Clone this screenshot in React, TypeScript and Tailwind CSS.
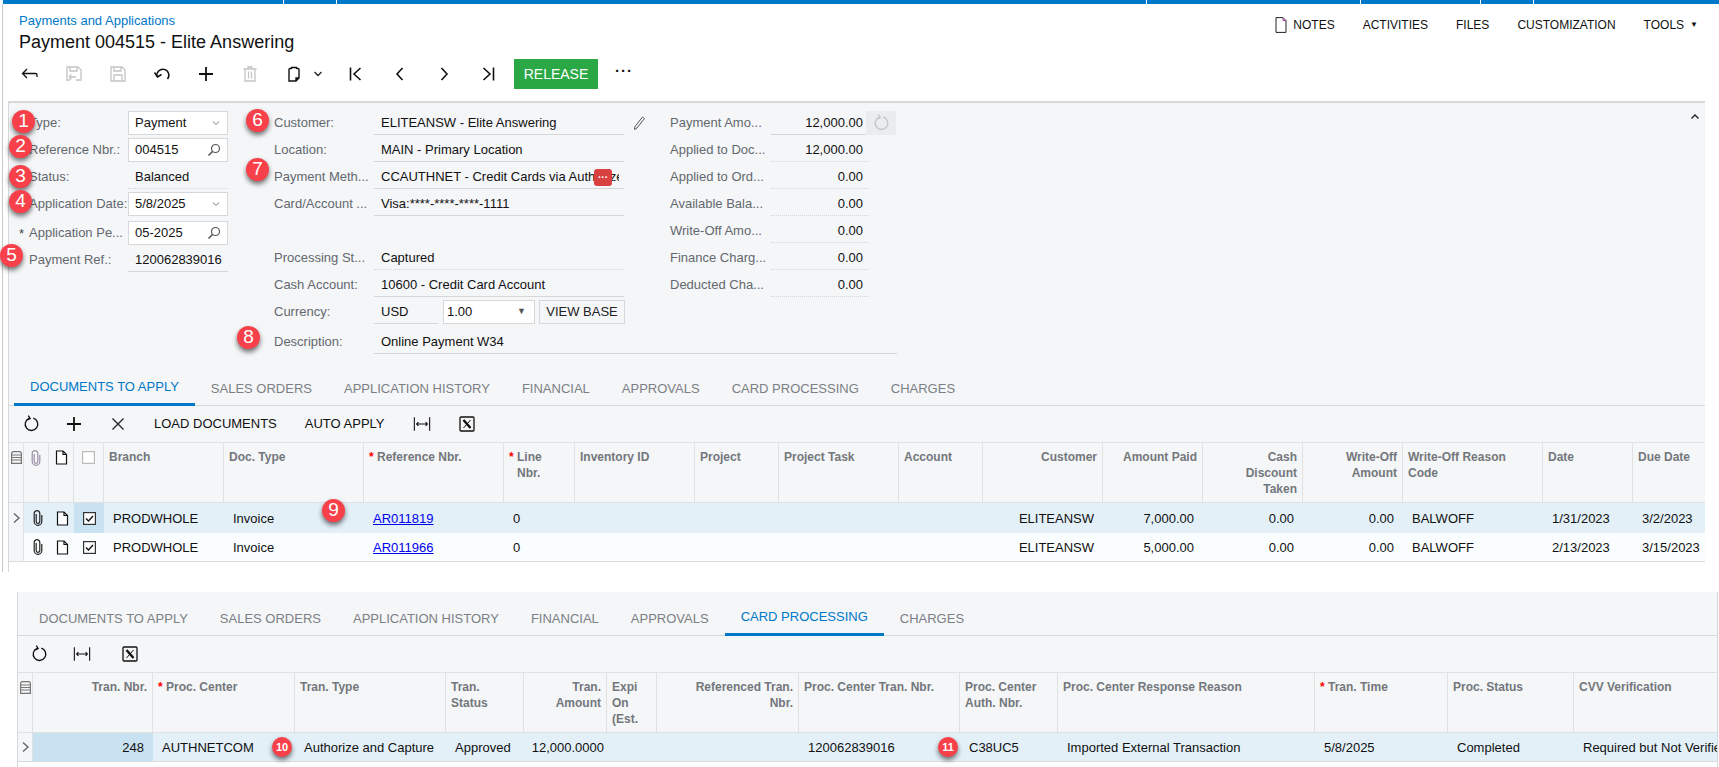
import type { ReactNode } from "react";

const TOP_COLS =
  "grid-cols-[15px_25px_25px_30px_120px_140px_140px_71px_120px_84px_120px_84px_120px_100px_100px_100px_140px_90px_71px]";
const BOTTOM_COLS =
  "grid-cols-[15px_120px_142px_151px_78px_83px_50px_142px_161px_98px_257px_133px_126px_143px]";

const SEL = "bg-[#c9e2f2]";

// Shared svg wrapper so the toolbar icons stay one size
function Ico({ children, size = 20, className = "" }: { children: ReactNode; size?: number; className?: string }) {
  return (
    <svg width={size} height={size} viewBox="0 0 20 20" fill="none" stroke="currentColor" strokeWidth="1.3" className={className}>
      {children}
    </svg>
  );
}

const BackIcon = () => (
  <Ico><path d="M7 5 2.5 9.5 7 14M3 9.5h12.5c.8 0 1.5.7 1.5 1.5v2" /></Ico>
);
const SaveBackIcon = () => (
  <Ico className="text-[#c4c4c4]">
    <path d="M6 16H3V3h11l3 3v10h-5M6 3v4h7V3M5 13h7M5 13l2.5-2.5M5 13l2.5 2.5" />
  </Ico>
);
const SaveIcon = () => (
  <Ico className="text-[#c4c4c4]">
    <path d="M3 3h11l3 3v11H3zM6 3v4h7V3M6 17v-6h8v6" />
  </Ico>
);
const UndoIcon = () => (
  <Ico>
    <path d="M5 12.5 A6 6 0 1 1 15.5 15" strokeWidth="1.5" />
    <path d="M2.5 8.5 5.5 13l4-2.5" strokeWidth="1.5" />
  </Ico>
);
const PlusIcon = () => (
  <Ico><path d="M10 3v14M3 10h14" strokeWidth="1.8" /></Ico>
);
const TrashIcon = () => (
  <Ico className="text-[#c4c4c4]">
    <path d="M3.5 5h13M8 5V3h4v2M5 5v12h10V5M8.5 7.5v7M11.5 7.5v7" />
  </Ico>
);
const ClipboardIcon = () => (
  <Ico>
    <path d="M7.5 5V3.5h5V5M7.5 4.5H6a1 1 0 0 0-1 1V17h7l3-3V5.500a1 1 0 0 0-1-1h-1.500M12 17v-3h3" strokeWidth="1.4" />
  </Ico>
);
const Chevron = ({ dir }: { dir: "left" | "right" }) => (
  <Ico><path d={dir === "left" ? "M12.500 4 7 10l5.500 6" : "M7.500 4 13 10l-5.500 6"} strokeWidth="1.6" /></Ico>
);
const FirstIcon = () => (
  <Ico><path d="M4.500 3.500v13M14.500 4 8 10l6.500 6" strokeWidth="1.6" /></Ico>
);
const LastIcon = () => (
  <Ico><path d="M15.500 3.500v13M5.500 4 12 10l-6.500 6" strokeWidth="1.6" /></Ico>
);
const SearchIcon = () => (
  <svg width="14" height="14" viewBox="0 0 14 14" fill="none" stroke="#555" strokeWidth="1.2">
    <circle cx="8.500" cy="5.500" r="4" />
    <path d="M5.500 8.500 1.500 12.500" strokeWidth="1.600" />
  </svg>
);
const DownIcon = () => (
  <svg width="10" height="10" viewBox="0 0 10 10" fill="none" stroke="#777" strokeWidth="1">
    <path d="M2 3.500 5 6.500 8 3.500" />
  </svg>
);
const RefreshIcon = ({ className = "" }: { className?: string }) => (
  <Ico size={18} className={className}>
    <path d="M8 3.700a7 7 0 1 0 4.500-.200" strokeWidth="1.500" />
    <path d="M7 .8 9 3.800 6 5.500" strokeWidth="1.500" />
  </Ico>
);
const FitIcon = () => (
  <Ico size={18}>
    <path d="M1.500 2.500v15M18.500 2.500v15M4 10h12M6 8l-2 2 2 2M14 8l2 2-2 2" strokeWidth="1.200" />
  </Ico>
);
const ExcelIcon = () => (
  <svg width="16" height="16" viewBox="0 0 16 16" fill="none" stroke="#111">
    <rect x="1" y="1" width="14" height="14" rx="1" strokeWidth="1.300" />
    <path d="M4.500 4 11.500 12" strokeWidth="2.400" />
    <path d="M11.500 4 4.500 12" strokeWidth="1" />
  </svg>
);
const Clip = ({ color }: { color: string }) => (
  <svg width="12" height="16" viewBox="0 0 12 16" fill="none" stroke={color} strokeWidth="1.200">
    <path d="M4.200 4v7.500a1.800 1.800 0 0 0 3.600 0V3.500a2.800 2.800 0 0 0-5.600 0v8a3.800 3.800 0 0 0 7.600 0V5" />
  </svg>
);
const Note = () => (
  <svg width="13" height="15" viewBox="0 0 13 15" fill="#fff" stroke="#111" strokeWidth="1.200">
    <path d="M1.500 1h6.500l3.500 3.500V14h-10z" />
    <path d="M8 1v3.500h3.500" fill="none" />
  </svg>
);
const RowDetails = () => (
  <svg width="11" height="13" viewBox="0 0 11 13" fill="none" stroke="#777" strokeWidth="1.200">
    <path d="M2 .6h7l1.400 1.400v10.400H.6V2z" />
    <path d="M.6 4h9.800M.6 6.500h9.800M.6 9h9.800" />
  </svg>
);
const Check = ({ on }: { on: boolean }) => (
  <svg width="13" height="13" viewBox="0 0 13 13" fill="#fff" stroke={on ? "#333" : "#bbb"} strokeWidth="1.200">
    <rect x=".6" y=".6" width="11.800" height="11.800" />
    {on && <path d="M3 6.500 5.500 9 10 4" fill="none" stroke="#111" strokeWidth="1.400" />}
  </svg>
);
const RowArrow = () => (
  <svg width="9" height="12" viewBox="0 0 9 12" fill="none" stroke="#666" strokeWidth="1.400">
    <path d="M2 1.500 7 6l-5 4.500" />
  </svg>
);

function Badge({ n, className }: { n: string; className: string }) {
  return (
    <div className={`absolute flex items-center justify-center rounded-full bg-[#f7404a] text-white shadow-[0_3px_5px_rgba(0,0,0,0.55)] ${className}`}>
      {n}
    </div>
  );
}

function Label({ children, star, className = "w-[99px]" }: { children: string; star?: boolean; className?: string }) {
  return (
    <div className={`relative shrink-0 text-[13px] whitespace-nowrap text-[#63686e] ${className}`}>
      {star && <span className="absolute left-[-10px] top-px text-[#444]">*</span>}
      {children}
    </div>
  );
}

function BoxField({ value, icon }: { value: string; icon: ReactNode }) {
  return (
    <div className="flex h-6 w-[100px] shrink-0 items-center justify-between border border-[#d6d8da] bg-white pl-[6px] pr-[6px] text-[13px] text-[#111]">
      <span>{value}</span>
      {icon}
    </div>
  );
}

function LineField({ children, dotted, className = "w-[250px] pl-[7px]" }: { children: ReactNode; dotted?: boolean; className?: string }) {
  return (
    <div className={`flex h-6 shrink-0 items-center overflow-hidden whitespace-nowrap border-b border-[#d4d6d8] text-[13px] text-[#111] ${dotted ? "border-dotted" : ""} ${className}`}>
      {children}
    </div>
  );
}

const AMOUNTS = [
  ["Payment Amo...", "12,000.00"],
  ["Applied to Doc...", "12,000.00"],
  ["Applied to Ord...", "0.00"],
  ["Available Bala...", "0.00"],
  ["Write-Off Amo...", "0.00"],
  ["Finance Charg...", "0.00"],
  ["Deducted Cha...", "0.00"],
];

function Tabs({ active }: { active: string }) {
  const tabs = ["DOCUMENTS TO APPLY", "SALES ORDERS", "APPLICATION HISTORY", "FINANCIAL", "APPROVALS", "CARD PROCESSING", "CHARGES"];
  return (
    <div className="flex h-[37px] border-b border-[#d6d8da] pl-[5px] text-[13px]">
      {tabs.map((t) =>
        t === active ? (
          <div key={t} className="-mb-px flex items-center border-b-[3px] border-[#0078c9] px-[16px] pt-[2px] text-[#0078c9]">
            {t}
          </div>
        ) : (
          <div key={t} className="flex items-center px-[16px] pt-[3px] text-[#7b8085]">
            {t}
          </div>
        )
      )}
    </div>
  );
}

function Head({ text, right, star, cls = "" }: { text: ReactNode; right?: boolean; star?: boolean; cls?: string }) {
  return (
    <div className={`flex border-r border-[#dfe1e3] px-[5px] pt-[6px] text-[12px] leading-[16px] font-bold text-[#73777c] ${right ? "justify-end text-right" : ""} ${cls}`}>
      {star && <span className="w-[8px] shrink-0 text-[#f00]">*</span>}
      <span>{text}</span>
    </div>
  );
}

function Cell({ children, right, cls = "" }: { children?: ReactNode; right?: boolean; cls?: string }) {
  return (
    <div className={`flex items-center overflow-hidden whitespace-nowrap px-[9px] pt-px text-[13px] text-[#111] ${right ? "justify-end" : ""} ${cls}`}>
      {children}
    </div>
  );
}

function Link({ children }: { children: string }) {
  return <span className="text-[#0000ee] underline">{children}</span>;
}

function DocRow({ selected, reference, amount, date, due }: { selected?: boolean; reference: string; amount: string; date: string; due: string }) {
  return (
    <div className={`grid ${TOP_COLS} ${selected ? "h-[30px] bg-[#e3f0f8]" : "h-[29px] border-b border-[#d9dbdd] bg-[#fafdfe]"}`}>
      <div className="flex items-center justify-center border-r border-[#dfe1e3] bg-[#f5f6f8]">{selected && <RowArrow />}</div>
      <div className="flex items-center justify-center pl-[3px]"><Clip color="#222" /></div>
      <div className="flex items-center justify-center pl-px"><Note /></div>
      <div className={`flex items-center justify-center ${selected ? SEL : ""}`}><Check on /></div>
      <Cell>PRODWHOLE</Cell>
      <Cell>Invoice</Cell>
      <Cell><Link>{reference}</Link></Cell>
      <Cell>0</Cell>
      <Cell />
      <Cell />
      <Cell />
      <Cell />
      <Cell right>ELITEANSW</Cell>
      <Cell right>{amount}</Cell>
      <Cell right>0.00</Cell>
      <Cell right>0.00</Cell>
      <Cell>BALWOFF</Cell>
      <Cell>{date}</Cell>
      <Cell cls="pr-0!">{due}</Cell>
    </div>
  );
}

export default function App() {
  return (
    <div className="relative h-[767px] w-[1719px] overflow-hidden bg-white [font-family:'Liberation_Sans',Arial,sans-serif]">
      {/* top app bar, the white ticks are menu separators */}
      <div className="ml-[3px] flex h-1 gap-px">
        <div className="w-[280px] bg-[#0078c9]" />
        <div className="w-[52px] bg-[#0078c9]" />
        <div className="w-[809px] bg-[#0078c9]" />
        <div className="w-[213px] bg-[#0078c9]" />
        <div className="w-[119px] bg-[#0078c9]" />
        <div className="w-[52px] bg-[#0078c9]" />
        <div className="flex-1 bg-[#0078c9]" />
      </div>

      <div className="ml-[2px] h-[568px] w-[1703px] border-l border-[#c9c9c9]">
        {/* page header */}
        <div className="flex h-[97px] flex-col">
          <div className="flex h-[55px] justify-between">
            <div className="pl-4 pt-[9px]">
              <div className="text-[13px] leading-[16px] text-[#0078c9]">Payments and Applications</div>
              <div className="mt-[1px] text-[18px] leading-[24px] text-[#111]">Payment 004515 - Elite Answering</div>
            </div>
            <div className="absolute right-[21px] top-[17px] flex items-center text-[12px] leading-[16px] text-[#111]">
              <svg width="12" height="16" viewBox="0 0 12 16" fill="none" className="mr-[6px]" stroke="#222">
                <path d="M1 .6h7l3 3V15.400H1z" />
                <path d="M8 .6v3h3" stroke="#a03fa0" />
              </svg>
              <span>NOTES</span>
              <span className="ml-[28px]">ACTIVITIES</span>
              <span className="ml-[28px]">FILES</span>
              <span className="ml-[28px]">CUSTOMIZATION</span>
              <span className="ml-[28px]">TOOLS</span>
              <span className="ml-[6px] text-[8px]">▼</span>
            </div>
          </div>
          <div className="ml-[5px] flex h-[30px] items-center text-[#111]">
            {[<BackIcon />, <SaveBackIcon />, <SaveIcon />, <UndoIcon />, <PlusIcon />, <TrashIcon />, <ClipboardIcon />].map((ic, i) => (
              <div key={i} className="flex h-[30px] w-[44px] items-center justify-center">{ic}</div>
            ))}
            <div className="-ml-[7px] mr-[7px] flex w-[18px] justify-center">
              <svg width="10" height="10" viewBox="0 0 10 10" fill="none" stroke="#222" strokeWidth="1.300"><path d="M1.500 3 5 6.500 8.500 3" /></svg>
            </div>
            <div className="flex h-[30px] w-[44px] items-center justify-center"><FirstIcon /></div>
            <div className="flex h-[30px] w-[44px] items-center justify-center"><Chevron dir="left" /></div>
            <div className="flex h-[30px] w-[44px] items-center justify-center"><Chevron dir="right" /></div>
            <div className="flex h-[30px] w-[44px] items-center justify-center"><LastIcon /></div>
            <div className="ml-1 flex h-[30px] w-[84px] items-center justify-center bg-[#2aa845] text-[14px] text-white">RELEASE</div>
            <div className="ml-[17px] -mt-[6px] text-[15px] font-bold tracking-[1px]">···</div>
          </div>
        </div>

        {/* form + grid panel */}
        <div className="relative ml-[5px] h-[471px] w-[1697px] border-l border-[#d6d8da]">
          <div className="h-[461px] border-t-2 border-[#d6d8da] bg-[#f5f6f8]">
            <div className="flex h-[266px] pt-2">
              <div className="w-[220px] pl-[20px]">
                <div className="mb-[3px] flex h-6 items-center"><Label>Type:</Label><BoxField value="Payment" icon={<DownIcon />} /></div>
                <div className="mb-[3px] flex h-6 items-center"><Label>Reference Nbr.:</Label><BoxField value="004515" icon={<SearchIcon />} /></div>
                <div className="mb-[3px] flex h-6 items-center"><Label>Status:</Label><LineField dotted className="w-[100px] pl-[7px]">Balanced</LineField></div>
                <div className="mb-[5px] flex h-6 items-center"><Label>Application Date:</Label><BoxField value="5/8/2025" icon={<DownIcon />} /></div>
                <div className="mb-[3px] flex h-6 items-center"><Label star>Application Pe...</Label><BoxField value="05-2025" icon={<SearchIcon />} /></div>
                <div className="flex h-6 items-center"><Label>Payment Ref.:</Label><LineField className="w-[100px] pl-[7px]">120062839016</LineField></div>
              </div>

              <div className="relative ml-[45px] w-[350px]">
                <div className="mb-[3px] flex h-6 items-center">
                  <Label className="w-[100px]">Customer:</Label>
                  <LineField>ELITEANSW - Elite Answering</LineField>
                  <svg width="14" height="16" viewBox="0 0 14 16" fill="none" stroke="#555" className="ml-2 shrink-0"><path d="M3 11.500 10.500 2l2 1.500L5 13l-2.500 1.500z" /></svg>
                </div>
                <div className="mb-[3px] flex h-6 items-center"><Label className="w-[100px]">Location:</Label><LineField>MAIN - Primary Location</LineField></div>
                <div className="mb-[3px] flex h-6 items-center">
                  <Label className="w-[100px]">Payment Meth...</Label>
                  <LineField>
                    <span className="w-[238px] overflow-hidden">CCAUTHNET - Credit Cards via Authorize</span>
                  </LineField>
                </div>
                <div className="mb-[30px] flex h-6 items-center"><Label className="w-[100px]">Card/Account ...</Label><LineField>Visa:****-****-****-1111</LineField></div>
                <div className="mb-[3px] flex h-6 items-center"><Label className="w-[100px]">Processing St...</Label><LineField dotted>Captured</LineField></div>
                <div className="mb-[3px] flex h-6 items-center"><Label className="w-[100px]">Cash Account:</Label><LineField>10600 - Credit Card Account</LineField></div>
                <div className="mb-[6px] flex h-6 items-center">
                  <Label className="w-[100px]">Currency:</Label>
                  <LineField className="w-[64px] pl-[7px]">USD</LineField>
                  <div className="ml-[5px] flex h-6 w-[92px] shrink-0 items-center justify-between border border-[#d6d8da] bg-white pl-[3px] pr-2 text-[13px] text-[#111]">
                    1.00
                    <span className="text-[9px] text-[#555]">▼</span>
                  </div>
                  <div className="ml-1 flex h-6 w-[86px] shrink-0 items-center justify-center border border-[#d6d8da] bg-[#f5f6f8] text-[13px] text-[#222]">VIEW BASE</div>
                </div>
                <div className="flex h-6 w-[623px] items-center"><Label className="w-[100px]">Description:</Label><LineField className="w-[523px] pl-[7px]">Online Payment W34</LineField></div>
              </div>

              <div className="ml-[46px] w-[240px]">
                {AMOUNTS.map(([label, value], i) => (
                  <div key={label} className="mb-[3px] flex h-6 items-center">
                    <Label className="w-[101px]">{label}</Label>
                    <div className={`flex h-6 w-[98px] shrink-0 items-center justify-end border-b pr-[6px] text-[13px] text-[#111] ${i === 0 ? "border-[#d4d6d8]" : "border-dotted border-[#d4d6d8]"}`}>
                      {value}
                    </div>
                    {i === 0 && (
                      <div className="-ml-[3px] flex h-6 w-[30px] shrink-0 items-center justify-center bg-[#ebecee]">
                        <RefreshIcon className="text-[#c4c4c4]" />
                      </div>
                    )}
                  </div>
                ))}
              </div>

              <div className="ml-auto mr-[5px] mt-[1px]">
                <svg width="10" height="10" viewBox="0 0 10 10" fill="none" stroke="#222" strokeWidth="1.400"><path d="M1.500 6.500 5 3l3.500 3.500" /></svg>
              </div>
            </div>

            <Tabs active="DOCUMENTS TO APPLY" />

            <div className="flex h-9 items-center text-[13px] text-[#111]">
              <div className="flex w-[43px] justify-center"><RefreshIcon /></div>
              <div className="flex w-[44px] justify-center"><PlusIcon /></div>
              <div className="flex w-[44px] justify-center">
                <svg width="14" height="14" viewBox="0 0 14 14" fill="none" stroke="#222" strokeWidth="1.300"><path d="M1.500 1.500 12.500 12.500M12.500 1.500 1.500 12.500" /></svg>
              </div>
              <span className="ml-[14px]">LOAD DOCUMENTS</span>
              <span className="ml-[28px]">AUTO APPLY</span>
              <div className="ml-[28px] flex w-[18px] justify-center"><FitIcon /></div>
              <div className="ml-[28px] flex w-[16px] justify-center"><ExcelIcon /></div>
            </div>

            <div className={`grid h-[61px] ${TOP_COLS} border-y border-[#dfe1e3]`}>
              <div className="flex justify-center border-r border-[#dfe1e3] pt-[8px]"><RowDetails /></div>
              <div className="flex justify-center border-r border-[#dfe1e3] pt-[7px]"><Clip color="#9a8fa6" /></div>
              <div className="flex justify-center border-r border-[#dfe1e3] pt-[7px]"><Note /></div>
              <div className="flex justify-center border-r border-[#dfe1e3] pt-[8px]"><Check on={false} /></div>
              <Head text="Branch" />
              <Head text="Doc. Type" />
              <Head text="Reference Nbr." star />
              <Head text={<>Line<br />Nbr.</>} star />
              <Head text="Inventory ID" />
              <Head text="Project" />
              <Head text="Project Task" />
              <Head text="Account" />
              <Head text="Customer" right />
              <Head text="Amount Paid" right />
              <Head text={<>Cash<br />Discount<br />Taken</>} right />
              <Head text={<>Write-Off<br />Amount</>} right />
              <Head text={<>Write-Off Reason<br />Code</>} />
              <Head text="Date" />
              <Head text="Due Date" cls="border-r-0" />
            </div>
            <DocRow selected reference="AR011819" amount="7,000.00" date="1/31/2023" due="3/2/2023" />
            <DocRow reference="AR011966" amount="5,000.00" date="2/13/2023" due="3/15/2023" />
          </div>
        </div>
      </div>

      {/* second cut-out: card processing tab */}
      <div className="ml-[17px] mt-[20px] h-[175px] w-[1701px] border-x border-[#d6d8da]">
        <div className="bg-[#f5f6f8]">
          <div className="h-[44px]"><div className="h-[7px]" /><Tabs active="CARD PROCESSING" /></div>
          <div className="flex h-[36px] items-center text-[#111]">
            <div className="flex w-[42px] justify-center"><RefreshIcon /></div>
            <div className="flex w-[44px] justify-center"><FitIcon /></div>
            <div className="ml-[4px] flex w-[44px] justify-center"><ExcelIcon /></div>
          </div>
          <div className={`grid h-[61px] ${BOTTOM_COLS} border-y border-[#dfe1e3]`}>
            <div className="flex justify-center border-r border-[#dfe1e3] pt-[8px]"><RowDetails /></div>
            <Head text="Tran. Nbr." right />
            <Head text="Proc. Center" star />
            <Head text="Tran. Type" />
            <Head text={<>Tran.<br />Status</>} />
            <Head text={<>Tran.<br />Amount</>} right />
            <Head text={<>Expi<br />On<br />(Est.</>} />
            <Head text={<>Referenced Tran.<br />Nbr.</>} right />
            <Head text="Proc. Center Tran. Nbr." />
            <Head text={<>Proc. Center<br />Auth. Nbr.</>} />
            <Head text="Proc. Center Response Reason" />
            <Head text="Tran. Time" star />
            <Head text="Proc. Status" />
            <Head text="CVV Verification" cls="border-r-0" />
          </div>
        </div>
        <div className={`grid h-[29px] ${BOTTOM_COLS} border-b border-[#d9dbdd] bg-[#e3f0f8]`}>
          <div className="flex items-center justify-center border-r border-[#dfe1e3] bg-[#f5f6f8]"><RowArrow /></div>
          <Cell right cls={SEL}>248</Cell>
          <Cell>AUTHNETCOM</Cell>
          <Cell>Authorize and Capture</Cell>
          <Cell>Approved</Cell>
          <Cell right cls="px-[3px]!">12,000.0000</Cell>
          <Cell />
          <Cell />
          <Cell>120062839016</Cell>
          <Cell>C38UC5</Cell>
          <Cell>Imported External Transaction</Cell>
          <Cell>5/8/2025</Cell>
          <Cell>Completed</Cell>
          <Cell cls="pr-0!">Required but Not Verified</Cell>
        </div>
      </div>

      {/* red callout markers and the overflow button drawn over the screen */}
      <div className="absolute left-[594px] top-[169px] flex h-[17px] w-[18px] items-center justify-center rounded-[3px] bg-[#d94141] text-[10px] font-bold leading-none text-white">···</div>
      <Badge n="1" className="left-[12px] top-[110px] h-[23px] w-[23px] text-[19px]" />
      <Badge n="2" className="left-[9px] top-[135px] h-[23px] w-[23px] text-[19px]" />
      <Badge n="3" className="left-[9px] top-[165px] h-[23px] w-[23px] text-[19px]" />
      <Badge n="4" className="left-[9px] top-[190px] h-[23px] w-[23px] text-[19px]" />
      <Badge n="5" className="left-0 top-[244px] h-[23px] w-[23px] text-[19px]" />
      <Badge n="6" className="left-[246px] top-[109px] h-[23px] w-[23px] text-[19px]" />
      <Badge n="7" className="left-[246px] top-[158px] h-[23px] w-[23px] text-[19px]" />
      <Badge n="8" className="left-[237px] top-[326px] h-[23px] w-[23px] text-[19px]" />
      <Badge n="9" className="left-[322px] top-[499px] h-[23px] w-[23px] text-[19px]" />
      <Badge n="10" className="left-[272px] top-[737px] h-5 w-5 text-[11px] font-bold" />
      <Badge n="11" className="left-[938px] top-[737px] h-5 w-5 text-[11px] font-bold" />
    </div>
  );
}
